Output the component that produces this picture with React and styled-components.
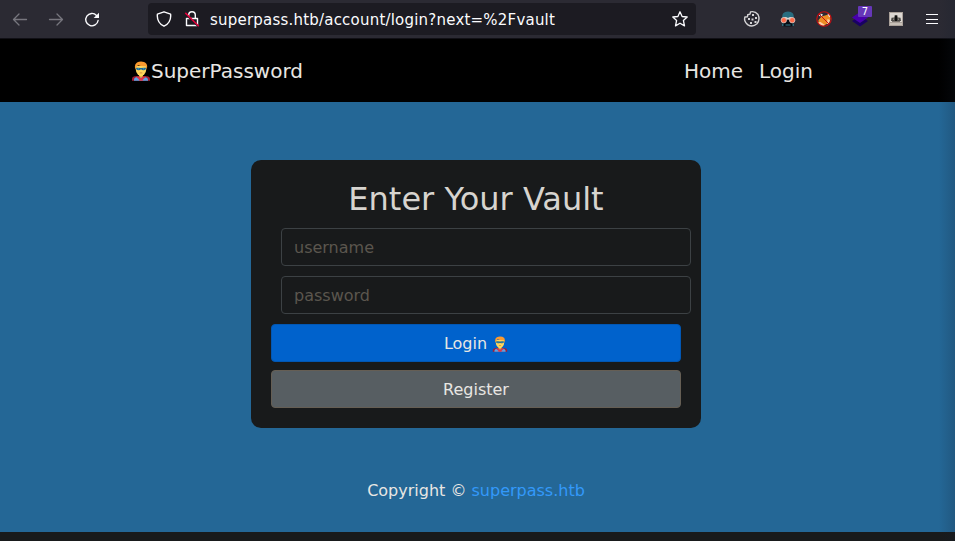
import React from 'react';
import styled, { createGlobalStyle } from 'styled-components';

const GlobalStyle = createGlobalStyle`
  *, *::before, *::after { box-sizing: border-box; }
  body {
    margin: 0;
    overflow: hidden;
    background: #181a1b;
    color: #e8e6e3;
    font: 16px/24px "DejaVu Sans", sans-serif;
  }
`;

const Window = styled.div`
  position: relative;
  height: 541px;
  display: flex;
  flex-direction: column;
`;

const EdgeShade = styled.div`
  position: absolute;
  top: 0;
  right: 0;
  bottom: 0;
  width: 16px;
  pointer-events: none;
  background: linear-gradient(to right, rgba(20, 30, 45, 0), rgba(20, 30, 45, 0.2));
`;

const Toolbar = styled.header`
  flex: none;
  height: 39px;
  padding-left: 2px;
  display: flex;
  background: #2b2a33;
  border-bottom: 1px solid #111016;
`;

const ToolGroup = styled.div`
  display: flex;
  height: 38px;
`;

const ToolButton = styled.span`
  width: 36px;
  display: flex;
  align-items: center;
  justify-content: center;
  color: ${(p) => (p.$dim ? '#77767e' : '#fbfbfe')};
  svg { display: block; overflow: visible; }
`;

const AddressBar = styled.div`
  width: 548px;
  height: 32px;
  margin: 3px 38px 0;
  padding: 0 8px;
  display: flex;
  align-items: center;
  gap: 12px;
  border-radius: 4px;
  background: #1c1b22;
  color: #fbfbfe;
  svg { display: block; flex: none; }
`;

const Url = styled.span`
  flex: 1;
  margin-left: -2px;
  padding-top: 1px;
  font-size: 15px;
  letter-spacing: 0.21px;
  line-height: 20px;
  white-space: nowrap;
`;

const Badge = styled.span`
  position: absolute;
  left: 6px;
  top: -5px;
  width: 14px;
  height: 11px;
  border-radius: 1px;
  background: #6637b8;
  color: #fff;
  font-size: 10px;
  line-height: 11px;
  text-align: center;
`;

const Badged = styled.span`
  position: relative;
  display: flex;
`;

const SiteNav = styled.nav`
  flex: none;
  height: 63px;
  padding: 1px 142px 0 131px;
  display: flex;
  align-items: center;
  justify-content: space-between;
  background: #000;
  font-size: 20px;
  line-height: 30px;
`;

const Brand = styled.div`
  display: flex;
  align-items: center;
`;

const NavLinks = styled.div`
  display: flex;
  gap: 16px;
`;

const Page = styled.main`
  flex: none;
  height: 430px;
  padding: 58px 3px 0 0;
  display: flex;
  flex-direction: column;
  align-items: center;
  background: #246796;
`;

const LoginCard = styled.form`
  width: 450px;
  height: 268px;
  padding: 20px;
  border-radius: 10px;
  background: #181a1b;
`;

const Title = styled.h2`
  margin: 0 0 10px;
  font-size: 32px;
  line-height: 38px;
  font-weight: 400;
  color: #d7d4cf;
  text-align: center;
`;

const Field = styled.input`
  display: block;
  width: 410px;
  height: 38px;
  margin: 0 0 10px 10px;
  padding: 6px 12px;
  border: 1px solid #3c4144;
  border-radius: 4px;
  background: #181a1b;
  color: #e8e6e3;
  font: inherit;
  &::placeholder { color: #5b564e; opacity: 1; }
`;

const Action = styled.button`
  width: 410px;
  height: 38px;
  margin: 0 0 8px;
  padding: 2px 0 0;
  display: flex;
  align-items: center;
  justify-content: center;
  gap: 5px;
  border: 1px solid ${(p) => (p.$primary ? '#0257b3' : '#655e54')};
  border-radius: 4px;
  background: ${(p) => (p.$primary ? '#0062cc' : '#575e62')};
  color: #e8e6e3;
  font: inherit;
`;

const Footer = styled.footer`
  margin-top: 51px;
`;

const FooterLink = styled.span`
  color: #3399fa;
`;

const Hero = ({ size }) => (
  <svg width={size} height={size} viewBox="0 0 20 20">
    <path d="M1 19.800V17.500q.2-2 2.700-2.300h12.600q2.500.3 2.700 2.300v2.300z" fill="#a51d35" />
    <path d="M3 19.800v-1.500q.3-2 3.500-2.300h7q3.200.3 3.500 2.300v1.500z" fill="#5aa5e6" />
    <path d="M5 15.500h3l2 1.300 2-1.300h3l-2 2.200H7zM7.500 17.700h5l-.8 2.100H8.300z" fill="#df3448" />
    <path d="M8 12h4v3.300l-2 1.500-2-1.500z" fill="#edbb38" />
    <path d="M4.800 5h10.400v3.500q0 3-2 5L11 15H9l-2.200-1.500q-2-2-2-5z" fill="#ffd65c" />
    <path d="M4.400 8.500Q2.800 3.500 6 1.500q3-1.600 7-.6 4.500 1.600 2.600 7.600l-.8-3.300Q10.500 5.600 7 4.200L5.300 6z" fill="#fb9a2e" />
    <path d="M4.900 6.800q2.600-.4 5.100.2 2.500-.6 5.100-.2 0 2.200-2.200 2.400-1.900.1-2.900-.9-1 1-2.900.9-2.200-.2-2.200-2.400z" fill="#176b99" />
    <path d="M6.800 7.900h1.300m3.800 0h1.300" stroke="#a7cbd4" strokeWidth=".5" />
    <path d="M8.700 11.900h2.600" stroke="#b8622a" strokeWidth=".6" />
  </svg>
);

const BackIcon = ({ flip }) => (
  <svg width="16" height="16" viewBox="0 0 16 16" fill="none" stroke="currentColor" strokeWidth="1.300" strokeLinecap="round" strokeLinejoin="round">
    <path d={flip ? 'M1.500 8.500h13M9 3 14.500 8.500 9 14' : 'M14.500 8.500h-13M7 3 1.500 8.500 7 14'} />
  </svg>
);

const ReloadIcon = () => (
  <svg width="16" height="16" viewBox="0 0 16 16" fill="none" stroke="currentColor" strokeWidth="1.400" strokeLinecap="round">
    <path d="M12.500 4.400A6.200 6.200 0 1 0 14.100 9.500" />
    <path d="M15 1.800v5.300H9.700z" fill="currentColor" stroke="none" />
  </svg>
);

const ShieldIcon = () => (
  <svg width="16" height="16" viewBox="0 0 16 16" fill="none" stroke="currentColor" strokeWidth="1.400" strokeLinejoin="round">
    <path d="M8 .8 14.600 3.200Q15.500 11.500 8 15.200.5 11.500 1.400 3.200z" />
  </svg>
);

const InsecureIcon = () => (
  <svg width="16" height="16" viewBox="0 0 16 16" fill="none">
    <path d="M4.700 7.500V4a3.300 3.300 0 0 1 6.600 0v3.500M2.500 7.500h11v7h-11z" stroke="#fbfbfe" strokeWidth="1.400" strokeLinejoin="round" />
    <path d="m2 3.700 12.500 12" stroke="#1c1b22" strokeWidth="1.600" />
    <path d="m1.300 1.900 13.500 13.300" stroke="#e4003b" strokeWidth="1.500" />
  </svg>
);

const StarIcon = () => (
  <svg width="16" height="16" viewBox="0 0 16 16" fill="none" stroke="currentColor" strokeWidth="1.300" strokeLinejoin="round">
    <path d="m8 .8 2.100 4.700 5.100.5-3.800 3.500 1.100 5.400L8 12.200l-4.500 2.700 1.100-5.400L.8 6l5.100-.5z" />
  </svg>
);

const CookieIcon = () => (
  <svg width="16" height="16" viewBox="0 0 16 16" fill="none">
    <path d="M6.500.9Q11-.2 14 3.500q2.500 5-1 9.300-4.500 4-9.400.8Q-.5 10 .9 6l2.600-.3.200-2 2.300-.6z" stroke="#d5d4d6" strokeWidth="1.400" strokeLinejoin="round" />
    <g fill="#d5d4d6">
      <path d="M8 3h2v2H8zM11 6h2v2h-2zM4 7h2v2H4zM7.500 7.500h2v2h-2zM10.500 10h2v2h-2zM6 11h2v2H6z" />
    </g>
  </svg>
);

const GogglesIcon = () => (
  <svg width="16" height="16" viewBox="0 0 16 16">
    <path d="M2 7.500Q1.500.8 8 .6q6.500.2 6 6.900z" fill="#286d80" />
    <path d="M2 9h12l-.5 6-2.500.5H5L2.500 15z" fill="#070d15" />
    <path d="M2.500 7Q5.500 5 8 7q2.500-2 5.500 0L12 9 8 8.500 4 9z" fill="#d8d5d2" />
    <circle cx="3.800" cy="9.200" r="2.700" fill="#ff6a48" stroke="#d8cbc6" strokeWidth=".8" />
    <circle cx="12.200" cy="9.200" r="2.700" fill="#ff6a48" stroke="#d8cbc6" strokeWidth=".8" />
    <path d="M2.800 12.500V15M13.200 12.500V15M5.500 14h5" stroke="#368092" strokeWidth="1.200" fill="none" />
  </svg>
);

const NoFoxIcon = () => (
  <svg width="16" height="16" viewBox="0 0 16 16">
    <path d="M5.500 5.500 9 4.500 14 3l.6 5-2 4L8 14.500l-5.500-2V9z" fill="#ee8d25" />
    <path d="m3 5 .5-3L7 3.500 5.500 5.500zM11.500 3 13 1.700l1.400 3.800-1.200.8z" fill="#e8e4e0" />
    <path d="m3 3.500 1-1.500 1.200 1.500zM12.300 3l.8-1.300 1.200 2.600z" fill="#101a20" />
    <path d="m2 11.500 2.500-.5 3 2 1.500 1-2 1-3.500-1zM11.500 8l2.500 1-1 3.500-2 .5z" fill="#ffd0a8" />
    <circle cx="8" cy="8" r="7.200" fill="none" stroke="#c70e12" strokeWidth="1.100" />
    <path d="m3 3 10 10" stroke="#c70e12" strokeWidth="1" />
  </svg>
);

const LayersIcon = () => (
  <svg width="16" height="16" viewBox="0 0 16 16">
    <path d="m8 5 8 5-8 5.600L0 10z" fill="#190064" />
    <path d="m8 1 8 5.500L8 12 0 6.500z" fill="#4800ac" />
  </svg>
);

const SpyIcon = () => (
  <svg width="14" height="14" viewBox="0 0 14 14">
    <path d="M0 0h14v14H0z" fill="#aaa19a" />
    <path d="M1 1h12v9H1z" fill="#dcd7d2" />
    <path d="M1 11h12v2H1z" fill="#c7bfb7" />
    <path d="M5.800 3h2.400l.6 2.500 2.700.3.500 3.200H2l.5-3.200 2.700-.3z" fill="#4a4845" />
    <path d="M3 9h8v1H3z" fill="#77716c" />
    <path d="M6 4h2v5H6z" fill="#111" />
    <path d="M4 6.500h1v1.500H4zM9 6.500h1v1.500H9z" fill="#8b8680" />
  </svg>
);

const MenuIcon = () => (
  <svg width="12" height="12" viewBox="0 0 12 12" stroke="currentColor" strokeWidth="1">
    <path d="M0 1.500h12M0 6.500h12M0 10.500h12" />
  </svg>
);

export default function App() {
  return (
    <Window>
      <GlobalStyle />
      <Toolbar>
        <ToolGroup>
          <ToolButton $dim><BackIcon /></ToolButton>
          <ToolButton $dim><BackIcon flip /></ToolButton>
          <ToolButton><ReloadIcon /></ToolButton>
        </ToolGroup>
        <AddressBar>
          <ShieldIcon />
          <InsecureIcon />
          <Url>superpass.htb/account/login?next=%2Fvault</Url>
          <StarIcon />
        </AddressBar>
        <ToolGroup>
          <ToolButton><CookieIcon /></ToolButton>
          <ToolButton><GogglesIcon /></ToolButton>
          <ToolButton><NoFoxIcon /></ToolButton>
          <ToolButton><Badged><LayersIcon /><Badge>7</Badge></Badged></ToolButton>
          <ToolButton><SpyIcon /></ToolButton>
          <ToolButton><MenuIcon /></ToolButton>
        </ToolGroup>
      </Toolbar>
      <SiteNav>
        <Brand><Hero size={20} />SuperPassword</Brand>
        <NavLinks><span>Home</span><span>Login</span></NavLinks>
      </SiteNav>
      <Page>
        <LoginCard>
          <Title>Enter Your Vault</Title>
          <Field placeholder="username" />
          <Field type="password" placeholder="password" />
          <Action type="button" $primary>Login <Hero size={16} /></Action>
          <Action type="button">Register</Action>
        </LoginCard>
        <Footer>Copyright © <FooterLink>superpass.htb</FooterLink></Footer>
      </Page>
      <EdgeShade />
    </Window>
  );
}
